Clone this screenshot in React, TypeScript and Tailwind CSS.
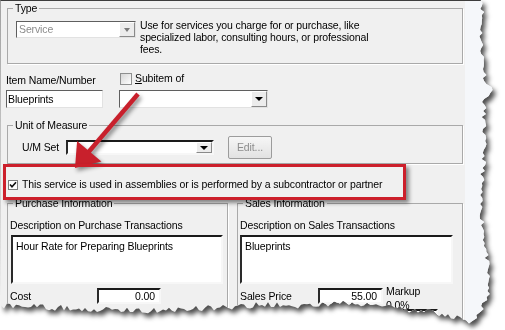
import React from 'react'

type Pt = [number, number]

// piecewise-linear guide for the torn paper edge
function along(guide: Pt[], t: number) {
  for (let i = 1; i < guide.length; i++) {
    const [a, av] = guide[i - 1]
    const [b, bv] = guide[i]
    if (t <= b) return av + ((bv - av) * (t - a)) / (b - a)
  }
  return guide[guide.length - 1][1]
}

function tornEdge() {
  let seed = 11
  const rnd = () => {
    seed = (seed * 16807) % 2147483647
    return seed / 2147483647 - 0.5
  }
  const right: Pt[] = [
    [0, 483], [40, 481], [84, 486], [90, 495], [98, 484], [160, 484],
    [200, 480], [250, 486], [290, 489], [308, 482], [320, 474],
  ]
  const bottom: Pt[] = [
    [0, 306], [150, 311], [260, 305], [300, 306], [340, 303],
    [385, 306], [420, 311], [450, 316], [472, 322],
  ]
  const pts: string[] = ['0px 0px']
  for (let y = 0; y <= 318; y += 3) pts.push(`${(along(right, y) + rnd() * 5).toFixed(1)}px ${y}px`)
  for (let x = 472; x >= 0; x -= 3) pts.push(`${x}px ${(along(bottom, x) + rnd() * 6).toFixed(1)}px`)
  return `polygon(${pts.join(', ')})`
}

const sunken = 'border border-t-[#5f5f5f] border-l-[#5f5f5f] border-r-[#e2e2e2] border-b-[#e2e2e2] bg-white'
const deep = 'border-2 border-t-[#1a1a1a] border-l-[#2a2a2a] border-r-[#f7f7f7] border-b-[#f7f7f7] bg-white'
const group = 'border border-[#a9a9a9] shadow-[1px_1px_0_#fff]'

function DropButton({ dim = false }: { dim?: boolean }) {
  return (
    <span className="flex h-full w-[16px] items-center justify-center border border-t-white border-l-white border-r-[#8a8a8a] border-b-[#8a8a8a] bg-[#ececec]">
      <span
        className={
          dim
            ? 'h-0 w-0 border-x-[3px] border-t-[4px] border-x-transparent border-t-[#7a7a7a]'
            : 'h-0 w-0 border-x-[4px] border-t-[4px] border-x-transparent border-t-black'
        }
      />
    </span>
  )
}

function CheckBox({ checked = false }: { checked?: boolean }) {
  return (
    <span
      className={
        checked
          ? 'flex h-[10px] w-[10px] shrink-0 items-center justify-center border border-[#7d7d7d] bg-white'
          : 'flex h-[12px] w-[12px] shrink-0 items-center justify-center border border-[#8e8f8f] bg-gradient-to-br from-[#d6d6d6] to-white'
      }
    >
      {checked && (
        <svg width="8" height="8" viewBox="0 0 8 8">
          <path d="M1 3.5 L3 5.8 L7 1.2" fill="none" stroke="#111" strokeWidth="1.6" />
        </svg>
      )}
    </span>
  )
}

function Arrow() {
  // shaft from the Subitem combo down to the checkbox row
  const tip: Pt = [74, 167]
  const from: Pt = [137, 93]
  const dx = tip[0] - from[0]
  const dy = tip[1] - from[1]
  const len = Math.hypot(dx, dy)
  const ux = dx / len
  const uy = dy / len
  const base: Pt = [tip[0] - ux * 22, tip[1] - uy * 22]
  const half = 16
  const a: Pt = [base[0] + uy * half, base[1] - ux * half]
  const b: Pt = [base[0] - uy * half, base[1] + ux * half]
  return (
    <svg
      className="pointer-events-none absolute left-0 top-0 [filter:drop-shadow(2px_3px_2px_rgba(0,0,0,0.45))]"
      width="498"
      height="330"
    >
      <line x1={from[0]} y1={from[1]} x2={base[0] + ux * 3} y2={base[1] + uy * 3} stroke="#c8202c" strokeWidth="4.5" />
      <polygon points={`${tip[0]},${tip[1]} ${a[0]},${a[1]} ${b[0]},${b[1]}`} fill="#c8202c" />
    </svg>
  )
}

export default function App() {
  const clip = tornEdge()
  return (
    <div className="h-[330px] w-[505px] overflow-hidden bg-white font-['Liberation_Sans',Arial,sans-serif] text-[10.5px] leading-[13px] tracking-[-0.12px] text-black">
      <div className="[filter:drop-shadow(3px_4px_2.5px_rgba(0,0,0,0.7))]">
        <div
          style={{ clipPath: clip }}
          className="relative flex h-[330px] w-[498px] items-start overflow-hidden border-l border-t border-l-[#a0a0a0] border-t-[#3c3c3c] bg-[#f0f0f0]"
        >
          <div className="w-[464px] shrink-0">
            {/* Type */}
            <fieldset className={`ml-[6px] mt-[1px] w-[456px] pb-[8px] pl-[5px] ${group}`}>
              <legend className="px-[2px]">Type</legend>
              <div className="ml-[3px] mt-[4px] flex items-start gap-[4px]">
                <div className={`mt-[2px] flex h-[17px] w-[120px] items-center justify-between pl-[2px] ${sunken} bg-[#fbfbfb]`}>
                  <span className="text-[#8c8c8c]">Service</span>
                  <DropButton dim />
                </div>
                <p className="leading-[12px]">
                  Use for services you charge for or purchase, like
                  <br />
                  specialized labor, consulting hours, or professional
                  <br />
                  fees.
                </p>
              </div>
            </fieldset>

            {/* Item name / subitem */}
            <div className="mt-[10px] flex">
              <div className="ml-[5px] w-[97px]">
                <div className="h-[13px] whitespace-nowrap">Item Name/Number</div>
                <div className={`mt-[3px] flex h-[18px] items-center pl-[1px] ${sunken}`}>Blueprints</div>
              </div>
              <div className="ml-[16px]">
                <div className="-mt-[2px] flex h-[13px] items-center gap-[3px] pl-[1px]">
                  <CheckBox />
                  <span>
                    <span className="underline">S</span>ubitem of
                  </span>
                </div>
                <div className={`mt-[5px] flex h-[18px] w-[149px] items-center justify-end ${sunken}`}>
                  <DropButton />
                </div>
              </div>
            </div>

            {/* Unit of Measure */}
            <fieldset className={`ml-[6px] mt-[11px] w-[456px] pb-[4px] pl-[5px] ${group}`}>
              <legend className="px-[2px]">Unit of Measure</legend>
              <div className="ml-[9px] mt-[4px] flex items-center">
                <span className="w-[44px]">U/M Set</span>
                <div className={`flex h-[15px] w-[148px] items-center justify-end ${deep}`}>
                  <DropButton />
                </div>
                <div className="ml-[14px] flex h-[23px] w-[44px] items-center justify-center rounded-[2px] border border-[#9c9c9c] bg-gradient-to-b from-[#f6f6f6] to-[#e2e2e2] text-[#8d8d8d]">
                  Edit...
                </div>
              </div>
            </fieldset>

            {/* highlighted option */}
            <div className="relative z-10 ml-[2px] flex h-[36px] w-[403px] items-center gap-[4px] border-[3px] border-[#cc1f2b] pl-[2px] pt-[5px] shadow-[3px_3px_4px_rgba(0,0,0,0.45)]">
              <CheckBox checked />
              <span className="whitespace-nowrap">
                This service is used in assemblies or is performed by a subcontractor or partner
              </span>
            </div>

            {/* Purchase / Sales */}
            <div className="-mt-[3px] ml-[6px] flex gap-[9px]">
              <fieldset className={`w-[221px] pb-[10px] pl-[2px] ${group}`}>
                <legend className="ml-[3px] px-[2px]">Purchase Information</legend>
                <div className="mt-[9px] whitespace-nowrap">Description on Purchase Transactions</div>
                <div className={`ml-[1px] mt-[3px] h-[49px] w-[212px] pl-[3px] pt-[3px] ${deep}`}>
                  Hour Rate for Preparing Blueprints
                </div>
                <div className="mt-[4px] flex items-center">
                  <span className="w-[87px]">Cost</span>
                  <div className={`flex h-[16px] w-[64px] items-center justify-end pr-[4px] ${deep}`}>0.00</div>
                </div>
                <div className="mt-[9px] flex items-center">
                  <span className="w-[87px]">Expense Account</span>
                  <div className={`h-[16px] w-[120px] ${deep}`} />
                </div>
              </fieldset>
              <fieldset className={`w-[226px] pb-[10px] pl-[2px] ${group}`}>
                <legend className="ml-[3px] px-[2px]">Sales Information</legend>
                <div className="mt-[9px] whitespace-nowrap">Description on Sales Transactions</div>
                <div className={`mt-[3px] h-[49px] w-[213px] pl-[3px] pt-[3px] ${deep}`}>Blueprints</div>
                <div className="mt-[4px] flex items-start">
                  <span className="flex h-[16px] w-[78px] items-center">Sales Price</span>
                  <div className={`flex h-[16px] w-[65px] items-center justify-end pr-[4px] ${deep}`}>55.00</div>
                  <div className="-mt-[4px] ml-[3px] leading-[14px]">
                    <div>Markup</div>
                    <div>0.0%</div>
                  </div>
                </div>
                <div className="-mt-[3px] flex items-center">
                  <span className="w-[78px] whitespace-nowrap">Income Account</span>
                  <div className={`h-[16px] w-[120px] ${deep}`} />
                </div>
              </fieldset>
            </div>
          </div>
          <div className="h-full flex-1 bg-[#f5f7fa]" />
          <Arrow />
        </div>
      </div>
    </div>
  )
}
